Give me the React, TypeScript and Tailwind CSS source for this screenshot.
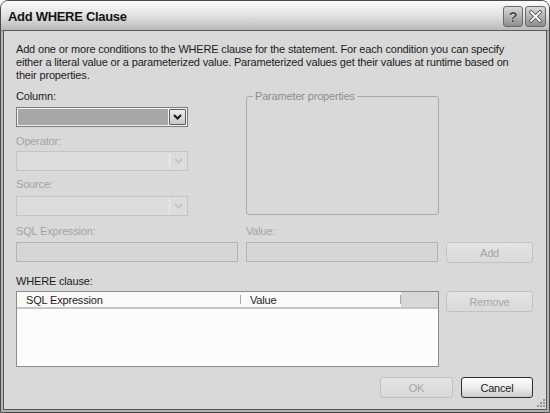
import React from "react";

function Chevron({ color }: { color: string }) {
  return (
    <svg width="9" height="6" viewBox="0 0 9 6">
      <path d="M1 1 L4.5 4.5 L8 1" fill="none" stroke={color} strokeWidth="2" />
    </svg>
  );
}

function Combo({ active }: { active?: boolean }) {
  if (active) {
    return (
      <div className="flex h-[20px] w-[172px] border border-[#7b7b7b] bg-[#f2f2f2] p-px">
        <div className="flex-1 bg-[#a7a7a7]" />
        <div className="ml-px flex w-[17px] items-center justify-center rounded-[1px] border border-[#5e5e5e] bg-gradient-to-b from-[#ececec] to-[#c9c9c9]">
          <Chevron color="#1a1a1a" />
        </div>
      </div>
    );
  }
  return (
    <div className="flex h-[20px] w-[172px] border border-[#c4c4c4] bg-[#dcdcdc] p-px">
      <div className="flex-1" />
      <div className="flex w-[17px] items-center justify-center border-l border-[#ebebeb]">
        <Chevron color="#c3c3c3" />
      </div>
    </div>
  );
}

function Button({ label, enabled, className }: { label: string; enabled?: boolean; className: string }) {
  return (
    <div
      className={
        enabled
          ? `flex h-[21px] items-center justify-center rounded-[3px] border border-[#2e2e2e] bg-gradient-to-b from-[#fdfdfd] via-[#ececec] to-[#cbcbcb] text-[#222] ${className}`
          : `flex h-[21px] items-center justify-center rounded-[3px] border border-[#c2c2c2] bg-gradient-to-b from-[#e4e4e4] to-[#d9d9d9] text-[#a6a6a6] ${className}`
      }
    >
      {label}
    </div>
  );
}

export default function App() {
  return (
    <div className="flex h-[413px] w-[550px] flex-col overflow-hidden rounded-t-[8px] border border-[#4a4a4a] bg-[#d9d9d9] font-['Liberation_Sans',Arial,sans-serif] text-[11px] leading-[12px] tracking-[-0.17px] text-[#1c1c1c]">
      {/* title bar */}
      <div className="flex h-[29px] shrink-0 items-center justify-between bg-gradient-to-b from-[#fbfbfb] via-[#e2e2e2] to-[#b9b9b9] pl-[7px] pr-[3px]">
        <span className="pt-[2px] text-[13px] font-bold tracking-[-0.3px] text-[#141414]">Add WHERE Clause</span>
        <div className="flex gap-[2px] pt-[2px]">
          <div className="flex h-[21px] w-[20px] items-center justify-center rounded-[3px] border border-[#6a6a6a] bg-gradient-to-b from-[#d9d9d9] to-[#8e8e8e] text-[15px] font-bold text-[#4a4a4a] [text-shadow:0_0_1px_#fff,0_0_1px_#fff]">
            ?
          </div>
          <div className="flex h-[21px] w-[21px] items-center justify-center rounded-[3px] border border-[#6a6a6a] bg-gradient-to-b from-[#d9d9d9] to-[#8e8e8e]">
            <svg width="13" height="13" viewBox="0 0 13 13">
              <path d="M2 2 L11 11 M11 2 L2 11" stroke="#555" strokeWidth="3.6" strokeLinecap="square" />
              <path d="M2 2 L11 11 M11 2 L2 11" stroke="#fff" strokeWidth="1.8" strokeLinecap="square" />
            </svg>
          </div>
        </div>
      </div>

      {/* window frame around client area */}
      <div className="flex min-h-0 flex-1 border-x-2 border-b-2 border-t border-x-[#b3b3b3] border-b-[#b3b3b3] border-t-[#5a5a5a]">
        <div className="relative flex flex-1 flex-col border-x border-b border-[#555] pl-[12px] pr-[13px] pt-[12px]">
          <p className="leading-[13px]">
            Add one or more conditions to the WHERE clause for the statement. For each condition you can specify
            <br />
            either a literal value or a parameterized value. Parameterized values get their values at runtime based on
            <br />
            their properties.
          </p>

          {/* column / operator / source + parameter properties */}
          <div className="mt-[8px] flex gap-[8px]">
            <div className="w-[222px]">
              <div className="h-[12px]">Column:</div>
              <div className="mt-[5px]">
                <Combo active />
              </div>
              <div className="mt-[8px] h-[12px] text-[#a3a3a3]">Operator:</div>
              <div className="mt-[4px]">
                <Combo />
              </div>
              <div className="mt-[7px] h-[12px] text-[#a3a3a3]">Source:</div>
              <div className="mt-[6px]">
                <Combo />
              </div>
            </div>
            <fieldset className="h-[125px] w-[193px] rounded-[3px] border border-[#a9a9a9]">
              <legend className="ml-[6px] px-[2px] leading-[12px] text-[#8e8e8e]">Parameter properties</legend>
            </fieldset>
          </div>

          {/* sql expression / value / add */}
          <div className="mt-[9px] flex gap-[8px]">
            <div className="w-[222px]">
              <div className="h-[12px] text-[#a3a3a3]">SQL Expression:</div>
              <div className="mt-[5px] h-[20px] border border-[#b4b4b4] bg-[#d6d6d6]" />
            </div>
            <div className="w-[192px]">
              <div className="h-[12px] text-[#a3a3a3]">Value:</div>
              <div className="mt-[5px] h-[20px] border border-[#b4b4b4] bg-[#d6d6d6]" />
            </div>
            <Button label="Add" className="mt-[17px] w-[87px]" />
          </div>

          {/* where clause list */}
          <div className="mt-[12px] h-[12px]">WHERE clause:</div>
          <div className="mt-[4px] flex gap-[7px]">
            <div className="h-[76px] w-[423px] border border-[#8c8c8c] bg-[#fcfcfc]">
              <div className="flex h-[17px] border-b-2 border-[#c6c6c6] bg-[#fafafa]">
                <div className="flex w-[223px] items-center pl-[9px]">SQL Expression</div>
                <div className="my-[3px] w-px bg-[#a8a8a8]" />
                <div className="flex w-[159px] items-center pl-[9px]">Value</div>
                <div className="my-[3px] w-px bg-[#a8a8a8]" />
                <div className="flex-1 bg-[#d8d8d8]" />
              </div>
            </div>
            <Button label="Remove" className="w-[87px]" />
          </div>

          {/* ok / cancel */}
          <div className="mt-[10px] flex justify-end gap-[8px]">
            <Button label="OK" className="w-[73px]" />
            <Button label="Cancel" enabled className="w-[72px]" />
          </div>

          {/* size grip */}
          <svg className="absolute bottom-[1px] right-[1px]" width="10" height="10" viewBox="0 0 10 10">
            {[
              [8, 0],
              [8, 3],
              [5, 3],
              [8, 6],
              [5, 6],
              [2, 6],
            ].map(([x, y]) => (
              <rect key={`${x}-${y}`} x={x} y={y + 1} width="2" height="2" fill="#9a9a9a" />
            ))}
          </svg>
        </div>
      </div>
    </div>
  );
}
